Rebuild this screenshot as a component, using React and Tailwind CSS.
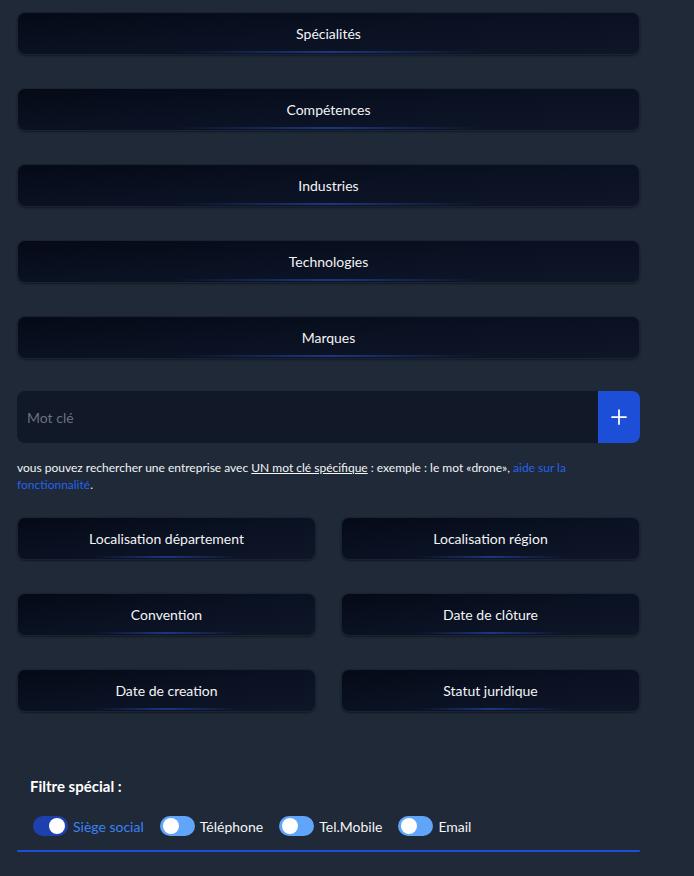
import { useState } from "react";
import { Plus } from "lucide-react";

const font = { fontFamily: 'Lato, "Open Sans", sans-serif' };

function FilterButton({ label }) {
  return (
    <button className="relative w-full h-[43px] rounded-lg border border-[#1a2233] bg-gradient-to-br from-[#050a16] via-[#0a1122] to-[#0e1628] text-[14px] text-gray-100 shadow-[0_1px_2px_rgba(0,0,0,0.4)]">
      {label}
      <span className="absolute left-1/2 -translate-x-1/2 bottom-[1px] h-[2px] w-1/2 bg-gradient-to-r from-transparent via-[#1e3a8a] to-transparent opacity-90" />
    </button>
  );
}

function Toggle({ label, on, onClick }) {
  return (
    <button onClick={onClick} className="flex items-center gap-[5px]">
      <span className={`flex items-center w-[35px] h-[20px] rounded-full px-[3px] ${on ? "bg-[#1e40af] justify-end" : "bg-[#60a5fa] justify-start"}`}>
        <span className="w-[16px] h-[16px] rounded-full bg-white" />
      </span>
      <span className={`text-[14px] ${on ? "text-[#3b82f6]" : "text-gray-100"}`}>{label}</span>
    </button>
  );
}

export default function App() {
  const [toggles, setToggles] = useState({ siege: true, tel: false, mobile: false, email: false });
  const flip = (k) => setToggles((t) => ({ ...t, [k]: !t[k] }));

  return (
    <div className="min-h-[876px] bg-[#1f2937] pt-[12px] pl-[17px] pr-[54px]" style={font}>
      <div className="flex flex-col gap-[33px]">
        {["Spécialités", "Compétences", "Industries", "Technologies", "Marques"].map((l) => (
          <FilterButton key={l} label={l} />
        ))}
      </div>

      <div className="mt-[32px] flex h-[52px] rounded-lg overflow-hidden">
        <input placeholder="Mot clé" className="flex-1 bg-[#111827] px-[10px] text-[14px] text-gray-100 placeholder-gray-500 outline-none" />
        <button className="w-[42px] bg-[#1d4ed8] flex items-center justify-center text-white">
          <Plus size={24} strokeWidth={1.75} />
        </button>
      </div>

      <p className="mt-[16px] text-[12px] leading-[17px] text-gray-100">
        vous pouvez rechercher une entreprise avec <span className="underline">UN mot clé spécifique</span> : exemple : le mot «drone», <a className="text-[#2563eb]">aide sur la fonctionnalité</a>.
      </p>

      <div className="mt-[24px] grid grid-cols-2 gap-x-[25px] gap-y-[33px]">
        {["Localisation département", "Localisation région", "Convention", "Date de clôture", "Date de creation", "Statut juridique"].map((l) => (
          <FilterButton key={l} label={l} />
        ))}
      </div>

      <div className="mt-[63px] px-[13px] text-[15px] font-bold text-white">Filtre spécial :</div>
      <div className="mt-[18px] px-[16px] flex items-center gap-[16px]">
        <Toggle label="Siège social" on={toggles.siege} onClick={() => flip("siege")} />
        <Toggle label="Téléphone" on={toggles.tel} onClick={() => flip("tel")} />
        <Toggle label="Tel.Mobile" on={toggles.mobile} onClick={() => flip("mobile")} />
        <Toggle label="Email" on={toggles.email} onClick={() => flip("email")} />
      </div>
      <div className="mt-[13px] h-[2px] rounded-full bg-[#1d4ed8]" />
    </div>
  );
}
